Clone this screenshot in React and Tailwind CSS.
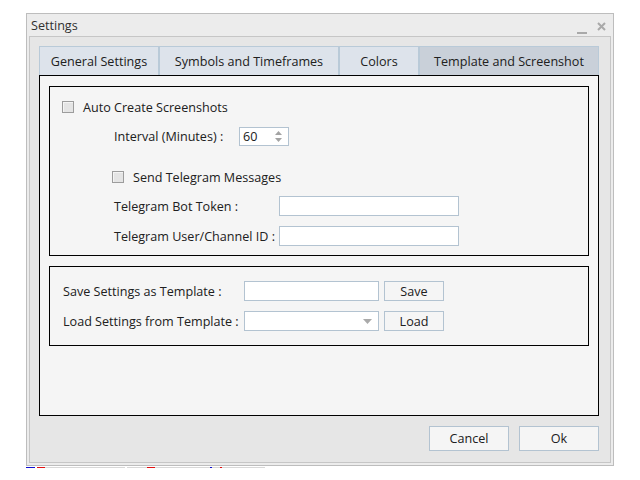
import React, { useState } from 'react';

const font = { fontFamily: '"Open Sans", "DejaVu Sans", sans-serif' };

function CheckBox({ checked, onChange }) {
  return (
    <button
      type="button"
      onClick={() => onChange(!checked)}
      className="w-[12px] h-[12px] border border-[#9c9c9c] bg-[#e4e4e4] shadow-[inset_1px_1px_0_#f4f4f4] flex items-center justify-center shrink-0"
    >
      {checked && <span className="w-[6px] h-[6px] bg-[#505050]"></span>}
    </button>
  );
}

function TextBox({ width, value = '' }) {
  return (
    <input
      type="text"
      defaultValue={value}
      className={`${width} h-[20px] shrink-0 border border-[#b3c3d1] bg-white px-[4px] text-[12.6px] text-[#202020] outline-none`}
      style={font}
    />
  );
}

function Button({ children, width }) {
  return (
    <button
      type="button"
      className={`${width} h-full border border-[#b3c3d1] bg-[#f5f5f5] text-[12.6px] text-[#202020] flex items-center justify-center pt-[2px]`}
    >
      {children}
    </button>
  );
}

function Tabs({ active, setActive }) {
  const tabs = [
    { name: 'General Settings', w: 'w-[120px]' },
    { name: 'Symbols and Timeframes', w: 'w-[180px]' },
    { name: 'Colors', w: 'w-[80px]' },
    { name: 'Template and Screenshot', w: 'w-[180px]' },
  ];
  return (
    <div className="flex h-[29px]">
      {tabs.map((t) => (
        <button
          key={t.name}
          type="button"
          onClick={() => setActive(t.name)}
          className={`${t.w} h-full border-x border-t border-[#b9cad8] text-[12.6px] text-[#202020] whitespace-nowrap flex items-center justify-center pt-[2px] ${
            active === t.name ? 'bg-[#c9d0d9]' : 'bg-[#dde3eb]'
          }`}
        >
          {t.name}
        </button>
      ))}
    </div>
  );
}

export default function App() {
  const [tab, setTab] = useState('Template and Screenshot');
  const [autoShots, setAutoShots] = useState(false);
  const [telegram, setTelegram] = useState(false);

  return (
    <div className="w-[640px] h-[480px] bg-white pl-[26px] pt-[13px]" style={font}>
      {/* Window */}
      <div className="w-[588px] h-[453px] border border-[#bdbdbd] bg-[#ececec] flex flex-col px-[2px] pb-[2px]">
        {/* Title bar */}
        <div className="h-[22px] flex items-center justify-between pl-[2px] pr-[5px] pt-[3px] shrink-0">
          <span className="text-[12.6px] text-[#303030]">Settings</span>
          <div className="flex items-center gap-[10px]">
            <svg width="10" height="14" viewBox="0 0 10 14" className="mt-[2px]">
              <rect x="0" y="11" width="10" height="2" fill="#a9a9a9" />
            </svg>
            <svg width="9" height="9" viewBox="0 0 9 9" className="mb-[1px]">
              <path d="M1 1 L8 8 M8 1 L1 8" stroke="#a9a9a9" strokeWidth="2" />
            </svg>
          </div>
        </div>

        {/* Inner frame */}
        <div className="flex-1 border border-[#c6c6c6] bg-[#e6e6e6] flex flex-col pl-[9px] pr-[11px] pt-[9px] pb-[11px]">
          <Tabs active={tab} setActive={setTab} />

          {/* Tab panel */}
          <div className="h-[341px] border border-black bg-[#f5f5f5] px-[9px] pt-[10px] flex flex-col gap-[10px] text-[12.6px] text-[#202020] whitespace-nowrap">
            {/* Screenshot group */}
            <div className="h-[170px] border border-black flex flex-col pl-[12px] pt-[10px]">
              <div className="h-[20px] flex items-center gap-[9px]">
                <CheckBox checked={autoShots} onChange={setAutoShots} />
                <span className="pt-[2px]">Auto Create Screenshots</span>
              </div>
              <div className="h-[20px] mt-[9px] flex items-center pl-[52px]">
                <span className="w-[125px] shrink-0 pt-[2px]">Interval (Minutes) :</span>
                <div className="w-[50px] h-[19px] border border-[#b3c3d1] bg-white flex items-center justify-between pl-[3px] pr-[5px]">
                  <span className="pt-[2px]">60</span>
                  <svg width="9" height="13" viewBox="0 0 9 13">
                    <path d="M4.5 1 L8 5 L1 5 Z" fill="#a3a3a3" />
                    <path d="M4.5 12 L8 8 L1 8 Z" fill="#a3a3a3" />
                  </svg>
                </div>
              </div>
              <div className="h-[20px] mt-[21px] flex items-center gap-[9px] pl-[50px]">
                <CheckBox checked={telegram} onChange={setTelegram} />
                <span className="pt-[2px]">Send Telegram Messages</span>
              </div>
              <div className="h-[20px] mt-[9px] flex items-center pl-[52px]">
                <span className="w-[165px] shrink-0 pt-[2px]">Telegram Bot Token :</span>
                <TextBox width="w-[180px]" />
              </div>
              <div className="h-[20px] mt-[10px] flex items-center pl-[52px]">
                <span className="w-[165px] shrink-0 pt-[2px]">Telegram User/Channel ID :</span>
                <TextBox width="w-[180px]" />
              </div>
            </div>

            {/* Template group */}
            <div className="h-[80px] border border-black flex flex-col pl-[13px] pt-[14px] gap-[10px]">
              <div className="h-[20px] flex items-center">
                <span className="w-[181px] shrink-0 pt-[2px]">Save Settings as Template :</span>
                <TextBox width="w-[135px]" />
                <div className="ml-[5px] h-[20px]">
                  <Button width="w-[60px]">Save</Button>
                </div>
              </div>
              <div className="h-[20px] flex items-center">
                <span className="w-[181px] shrink-0 pt-[2px]">Load Settings from Template :</span>
                <div className="w-[135px] h-[20px] shrink-0 border border-[#b3c3d1] bg-white flex items-center justify-end pr-[6px]">
                  <svg width="9" height="5" viewBox="0 0 9 5">
                    <path d="M0 0 L9 0 L4.5 5 Z" fill="#aaaaaa" />
                  </svg>
                </div>
                <div className="ml-[5px] h-[20px]">
                  <Button width="w-[60px]">Load</Button>
                </div>
              </div>
            </div>
          </div>

          {/* Dialog buttons */}
          <div className="h-[25px] mt-[10px] flex justify-end gap-[10px]">
            <Button width="w-[80px]">Cancel</Button>
            <Button width="w-[80px]">Ok</Button>
          </div>
        </div>
      </div>

      {/* Chart strip peeking out below the window */}
      <div className="flex mt-[1px] h-[1px] w-[240px]">
        <div className="w-[9px] bg-[#1010d0]"></div>
        <div className="w-[2px]"></div>
        <div className="w-[8px] bg-[#e01010]"></div>
        <div className="w-[80px] bg-[#d8d8d8]"></div>
        <div className="w-[2px]"></div>
        <div className="w-[20px] bg-[#d8d8d8]"></div>
        <div className="w-[8px] bg-[#e01010]"></div>
        <div className="w-[55px] bg-[#d8d8d8]"></div>
        <div className="w-[2px] bg-[#1010d0]"></div>
        <div className="w-[8px] bg-[#d8d8d8]"></div>
        <div className="w-[2px] bg-[#e01010]"></div>
        <div className="w-[43px] bg-[#d8d8d8]"></div>
      </div>
    </div>
  );
}
